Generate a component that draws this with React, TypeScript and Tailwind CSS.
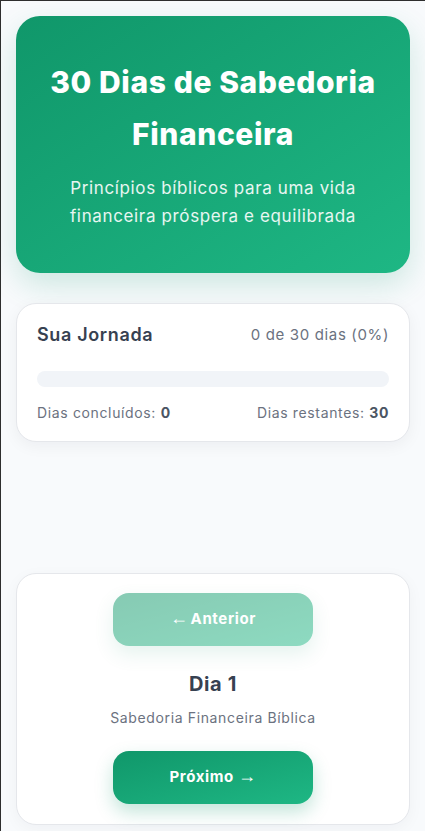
import React from 'react';

const font = { fontFamily: 'Inter, "Noto Sans", sans-serif' };
const arrowFont = { fontFamily: '"Liberation Sans", "DejaVu Sans", sans-serif' };

const App = () => {
  const total = 30;
  const done = 0;
  const pct = Math.round((done / total) * 100);

  return (
    <div
      className="min-h-[831px] w-full bg-[#f8fafc] border-t border-l border-[#2e2e2e] text-[#374151] tracking-[0.04em]"
      style={font}
    >
      <div className="px-[15px] pt-[15px] pb-2">
        {/* cabeçalho */}
        <header className="rounded-[24px] bg-gradient-to-br from-[#10976a] to-[#1eb784] px-6 pt-[40px] pb-[43px] text-center shadow-[0_12px_30px_rgba(16,151,106,0.18)]">
          <h1 className="text-[30px] font-extrabold leading-[52px] tracking-[0.02em] text-white">
            30 Dias de Sabedoria Financeira
          </h1>
          <p className="mt-[14px] text-[17px] leading-[28px] text-white/90">
            Princípios bíblicos para uma vida financeira próspera e equilibrada
          </p>
        </header>

        {/* progresso */}
        <section className="mt-[30px] rounded-[20px] border border-[#e5e7eb] bg-white px-5 pt-[17px] pb-[18px] shadow-[0_4px_16px_rgba(15,23,42,0.05)]">
          <div className="flex items-center justify-between">
            <h2 className="text-[18px] font-semibold leading-[28px] text-[#374151]">Sua Jornada</h2>
            <span className="text-[15px] leading-[28px] text-[#6b7280]">
              {done} de {total} dias ({pct}%)
            </span>
          </div>
          <div className="mt-[22px] h-4 w-full overflow-hidden rounded-full bg-[#f1f4f8]">
            <div className="h-full rounded-full bg-[#10976a]" style={{ width: `${pct}%` }} />
          </div>
          <div className="mt-[16px] flex justify-between text-[14px] leading-5 text-[#6b7280]">
            <span>
              Dias concluídos: <b className="font-bold text-[#4b5563]">{done}</b>
            </span>
            <span>
              Dias restantes: <b className="font-bold text-[#4b5563]">{total - done}</b>
            </span>
          </div>
        </section>

        {/* navegação */}
        <section className="mt-[131px] flex flex-col items-center rounded-[20px] border border-[#e5e7eb] bg-white px-5 pt-[19px] pb-[20px] shadow-[0_4px_16px_rgba(15,23,42,0.04)]">
          <button
            disabled
            className="flex h-[53px] w-[200px] items-center justify-center gap-[2px] rounded-[16px] bg-gradient-to-br from-[#10976a] to-[#1eb784] text-[15px] font-bold text-white opacity-50 shadow-[0_8px_18px_rgba(16,151,106,0.2)]"
          >
            <span className="-translate-y-[2px] text-[18px] leading-none" style={arrowFont}>←</span>
            Anterior
          </button>
          <h3 className="mt-[24px] text-[20px] font-bold leading-[28px] text-[#374151]">Dia 1</h3>
          <p className="mt-[10px] text-[14px] leading-5 text-[#6b7280]">Sabedoria Financeira Bíblica</p>
          <button className="mt-[23px] flex h-[53px] w-[200px] items-center justify-center gap-[4px] rounded-[16px] bg-gradient-to-br from-[#10976a] to-[#1eb784] text-[15px] font-bold text-white shadow-[0_8px_18px_rgba(16,151,106,0.25)]">
            Próximo
            <span className="-translate-y-[2px] text-[18px] leading-none" style={arrowFont}>→</span>
          </button>
        </section>
      </div>
    </div>
  );
};

export default App;
